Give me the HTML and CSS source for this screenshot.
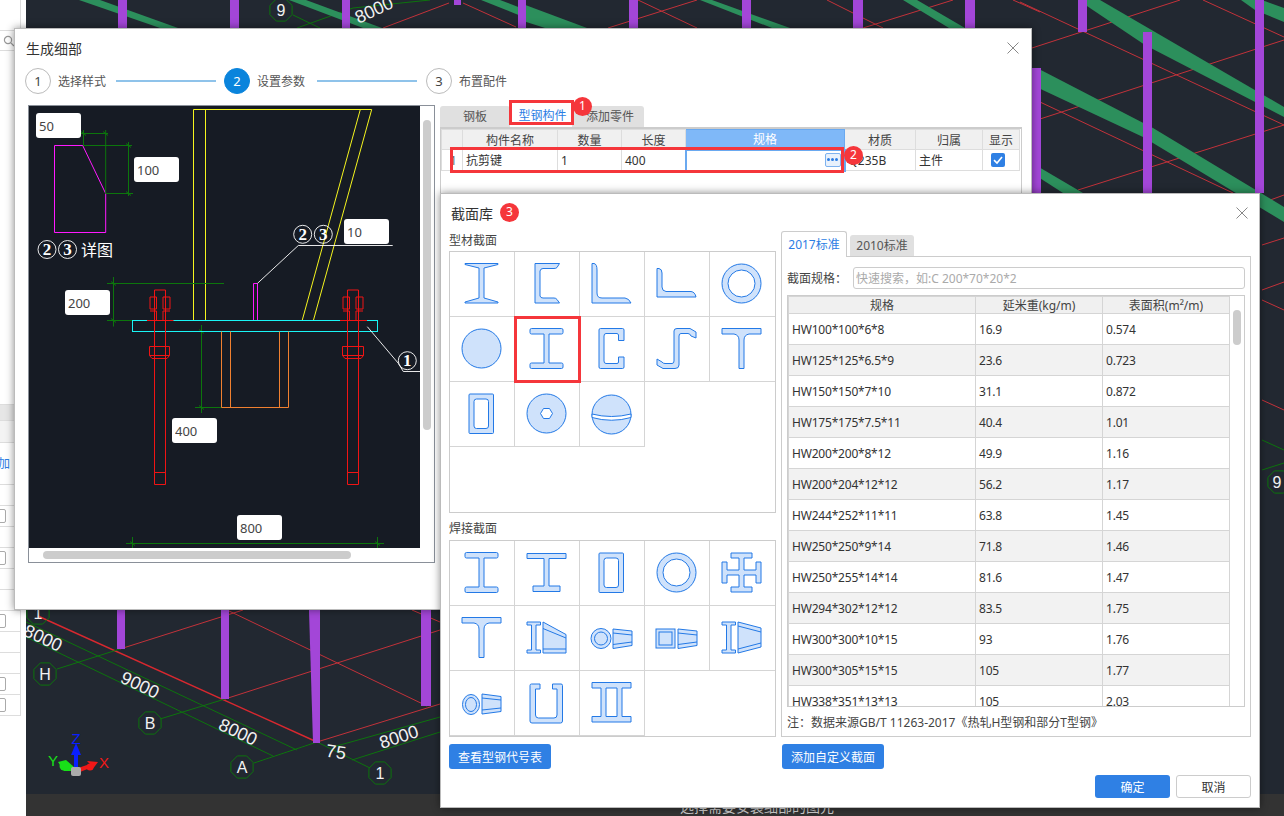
FILE: index.html
```html
<!DOCTYPE html>
<html lang="zh-CN">
<head>
  <meta charset="UTF-8"/>
  <title>生成细部</title>
  <link rel="stylesheet" href="styles.css">
</head>
<body>
<div class="app">
  <!-- left property list, mostly hidden behind the dialog -->
  <div class="side">
    <div class="side-top"></div>
    <div class="side-search">
      <svg viewBox="0 0 12 12" width="12" height="12"><circle cx="5" cy="5" r="3.6"/><path d="M7.6 7.6L11 11"/></svg>
    </div>
    <div class="side-gap"></div>
    <div class="side-band"><span>›</span></div>
    <div class="side-blank"></div>
    <div class="side-add">加</div>
    <div class="side-row"></div>
    <div class="side-row"><i></i></div>
    <div class="side-row"></div>
    <div class="side-row"><i></i></div>
    <div class="side-row"></div>
    <div class="side-row"></div>
    <div class="side-row"><i></i></div>
    <div class="side-row"></div>
    <div class="side-row"></div>
    <div class="side-row"><i></i></div>
    <div class="side-row"><i></i></div>
  </div>

  <div class="view">
    <svg class="cad" viewBox="26 0 1258 794" width="1258" height="794">
      <defs>
        <polygon id="oct" points="11.1,4.6 4.6,11.1 -4.6,11.1 -11.1,4.6 -11.1,-4.6 -4.6,-11.1 4.6,-11.1 11.1,-4.6"/>
      </defs>
      <g class="red">
        <path d="M383 28L449 3M463 3L516 27M608 28L697 0M638 0L697 28M827 0L883 28M863 28L953 0M1013 0L1040 12"/>
        <path d="M1020 2L1284 125M1203 0L1284 37M1032 48L1180 0M1040 119L1284 40M1078 190L1284 125M1040 102L1233 193M1262 203L1284 195"/>
        <path d="M1262 245L1284 238M1262 290L1284 282M1262 300L1284 310M1262 400L1284 410"/>
        <path d="M120 649L243 610M225 699L440 630M317 742L440 704M227 610L427 706M412 610L440 622"/>
        <path class="thick" d="M38 616L317 742"/>
      </g>
      <g class="grn">
        <path d="M293 15L320 28M297 28L353 8M353 8L430 0"/>
        <path d="M26 622L297 750M26 637L273 756M57 669L120 649M160 719L225 699M254 763L317 742M370 768L317 742M352 760L440 732M333 747L440 717"/>
        <path d="M1262 440L1284 450M1262 470L1284 463"/>
        <use href="#oct" x="281" y="10"/>
        <use href="#oct" x="38" y="613"/>
        <use href="#oct" x="45" y="674"/>
        <use href="#oct" x="150" y="723"/>
        <use href="#oct" x="242" y="767"/>
        <use href="#oct" x="380" y="773"/>
        <use href="#oct" x="1279" y="482"/>
      </g>
      <g class="beam">
        <polygon points="79,0 100,0 178,28 160,28"/>
        <polygon points="289,0 306,0 382,28 363,28"/>
        <polygon points="481,0 500,0 526,10 526,18"/>
        <polygon points="520,3 587,28 545,28 520,20"/>
        <polygon points="700,0 712,0 790,28 772,28"/>
        <polygon points="903,0 917,0 965,28 949,28"/>
        <polygon points="1078,0 1100,0 1284,107 1284,117 1145,45"/>
        <polygon points="1037,68 1153,128 1284,207 1284,222 1143,137 1032,85"/>
        <polygon points="1241,0 1262,0 1284,8 1284,22 1255,10"/>
        <polygon points="1032,163 1083,193 1063,193 1032,173"/>
      </g>
      <g class="col">
        <rect x="118" y="0" width="9" height="28"/><rect x="230" y="0" width="9" height="28"/>
        <rect x="342" y="0" width="8" height="28"/><rect x="454" y="0" width="7" height="5"/>
        <rect x="518" y="0" width="8" height="28"/><rect x="629" y="0" width="9" height="28"/>
        <rect x="742" y="0" width="9" height="28"/><rect x="853" y="0" width="10" height="28"/>
        <rect x="965" y="0" width="10" height="28"/><rect x="1078" y="0" width="9" height="32"/>
        <rect x="1143" y="32" width="9" height="161"/><rect x="1255" y="0" width="9" height="193"/>
        <rect x="1032" y="68" width="9" height="125"/>
        <rect x="117" y="610" width="8" height="39"/><rect x="221" y="610" width="8" height="89"/>
        <polygon points="309,610 320,610 320,743 313,743"/><rect x="421" y="610" width="10" height="96"/>
      </g>
      <g class="cad-txt">
        <text class="big" x="374" y="16" transform="rotate(-25 374 10)" text-anchor="middle">8000</text>
        <text class="big" x="43" y="644" transform="rotate(25 43 638)" text-anchor="middle">8000</text>
        <text class="big" x="140" y="691" transform="rotate(25 140 685)" text-anchor="middle">9000</text>
        <text class="big" x="238" y="738" transform="rotate(25 238 732)" text-anchor="middle">8000</text>
        <text class="big" x="336" y="758" transform="rotate(8 336 752)" text-anchor="middle">75</text>
        <text class="big" x="399" y="743" transform="rotate(-18 399 737)" text-anchor="middle">8000</text>
        <text x="281" y="16" text-anchor="middle">9</text>
        <text x="38" y="619" text-anchor="middle">1</text>
        <text x="45" y="680" text-anchor="middle">H</text>
        <text x="150" y="729" text-anchor="middle">B</text>
        <text x="242" y="773" text-anchor="middle">A</text>
        <text x="380" y="779" text-anchor="middle">1</text>
        <text x="1277" y="488" text-anchor="middle">9</text>
      </g>
      <!-- axis gizmo -->
      <g class="gizmo">
        <path class="g-z" d="M74 768V755H71L76 743L81 755H78V768Z"/>
        <path class="g-y" d="M58 762L66 760L74 767L72 771L64 771Z"/>
        <circle class="g-y" cx="64" cy="766" r="4.500"/>
        <path class="g-x" d="M78 768L90 764L87 761L98 762L92 770L90 768L80 772Z"/>
        <circle class="g-x" cx="90" cy="767" r="3.500"/>
        <rect class="g-box" x="71" y="767" width="10" height="9" rx="2"/>
        <text class="t-z" x="76" y="744" text-anchor="middle">Z</text>
        <text class="t-y" x="53" y="766" text-anchor="middle">Y</text>
        <text class="t-x" x="104" y="768" text-anchor="middle">X</text>
      </g>
    </svg>
    <div class="status">选择需要安装细部的图元</div>
  </div>
</div>

<!-- first dialog -->
<div class="win win-detail">
  <div class="win-head">
    <span class="win-title">生成细部</span>
    <svg class="win-close" viewBox="0 0 12 12" width="12" height="12"><path d="M.5 .5L11.500 11.500M11.500 .5L.5 11.500"/></svg>
  </div>
  <div class="steps">
    <span class="step-num">1</span><span class="step-txt">选择样式</span>
    <span class="step-line"></span>
    <span class="step-num on">2</span><span class="step-txt">设置参数</span>
    <span class="step-line wide"></span>
    <span class="step-num">3</span><span class="step-txt">布置配件</span>
  </div>
  <div class="detail-body">
    <div class="draw-panel">
      <div class="draw">
        <svg viewBox="29 106 391 442" width="391" height="442">
          <g class="l-yel">
            <path d="M193.500 320V109.500H371.700L313.500 320M205.500 109.500V320M360.300 109.500L302.300 320"/>
          </g>
          <g class="l-mag">
            <path d="M54.500 145.500H82.700L105.700 193.500V232.500H54.500Z"/>
            <path d="M253.500 320V283.500H257.500V320"/>
          </g>
          <g class="l-grn">
            <path d="M83.500 130V146M80 133.500H108M105.700 130V193.500M83 145.500H132M128.500 142V196M105.700 193.500H133"/>
            <path d="M107 283.500H224M113.500 277V326.500M107 320.500H142"/>
            <path d="M201.500 325V413M195 331.500H222M195 407.500H222"/>
            <path d="M126 543.500H384M132.500 537V548M377.500 537V548"/>
            <path d="M111 281.500l5 4M111 318.500l5 4M199 329.500l5 4M199 405.500l5 4M130 541.500l5 4M375 541.500l5 4M81 131.500l5 4M103 131.500l5 4M126 143.500l5 4M126 191.500l5 4"/>
          </g>
          <g class="l-cya">
            <rect x="132.500" y="320.500" width="245" height="11"/>
          </g>
          <g class="l-org">
            <path d="M221.500 331.500V407.500H288.500V331.500M230.500 331.500V407.500M279.500 331.500V407.500"/>
          </g>
          <g class="l-red">
            <path d="M154.500 290H165.500V472.500H154.500ZM154.500 484.500H165.500V472.500H154.500Z"/>
            <path d="M150 297H156.500V309H150ZM163 297H170V309H163ZM150 311H156.500V320M170 311H163V320M147 320.500H173.500"/>
            <path d="M149.500 346.500H169.500V355.500L167 358.500H152L149.500 355.500ZM149.500 355.500H169.500"/>
            <path d="M347.500 290H358.500V472.500H347.500ZM347.500 484.500H358.500V472.500H347.500Z"/>
            <path d="M343 297H349.500V309H343ZM356 297H363V309H356ZM343 311H349.500V320M363 311H356V320M340 320.500H367"/>
            <path d="M342.500 346.500H363.500V355.500L361 358.500H345L342.500 355.500ZM342.500 355.500H363.500"/>
          </g>
          <g class="l-wht">
            <path d="M392.700 245.500H298.300L257.500 283.300M367.300 326.700L398.300 363.300L403.300 371.500H420"/>
            <circle cx="47" cy="249.500" r="9"/><circle cx="67.500" cy="249.500" r="9"/>
            <circle cx="302.700" cy="234.300" r="9"/><circle cx="323.300" cy="234.300" r="9"/>
            <circle cx="407.300" cy="360.700" r="9"/>
          </g>
          <g class="draw-txt">
            <text x="47" y="255" text-anchor="middle">2</text><text x="67.500" y="255" text-anchor="middle">3</text>
            <text x="302.700" y="240" text-anchor="middle">2</text><text x="323.300" y="240" text-anchor="middle">3</text>
            <text x="407.300" y="366" text-anchor="middle">1</text>
            <text class="cn" x="81" y="256">详图</text>
          </g>
        </svg>
        <input class="dim d-50" value="50">
        <input class="dim d-100" value="100">
        <input class="dim d-10" value="10">
        <input class="dim d-200" value="200">
        <input class="dim d-400" value="400">
        <input class="dim d-800" value="800">
      </div>
      <span class="thumb thumb-v"></span>
      <span class="thumb thumb-h"></span>
    </div>

    <div class="parts">
      <div class="tabs">
        <span class="tab tab-a">钢板</span>
        <span class="tab tab-b on">型钢构件</span>
        <span class="tab tab-c">添加零件</span>
      </div>
      <div class="parts-box">
        <table class="parts-table">
          <colgroup><col class="c0"><col class="c1"><col class="c2"><col class="c2"><col class="c3"><col class="c4"><col class="c5"><col class="c6"></colgroup>
          <thead><tr><th></th><th>构件名称</th><th>数量</th><th>长度</th><th class="hot">规格</th><th>材质</th><th>归属</th><th>显示</th></tr></thead>
          <tbody><tr>
            <td class="idx">1</td><td>抗剪键</td><td>1</td><td>400</td>
            <td class="edit"><span class="more"><i></i><i></i><i></i></span></td>
            <td>Q235B</td><td>主件</td>
            <td class="chk"><span class="check"><svg viewBox="0 0 14 14" width="14" height="14"><path d="M3 7.200L6 10L11 4"/></svg></span></td>
          </tr></tbody>
        </table>
      </div>
    </div>
  </div>
  <span class="mark mark-tab"></span>
  <span class="mark mark-row"></span>
  <span class="badge badge-1">1</span>
  <span class="badge badge-2">2</span>
</div>

<!-- second dialog -->
<div class="win win-lib">
  <div class="win-head lib-head">
    <span class="win-title">截面库</span>
    <span class="badge badge-3">3</span>
    <svg class="win-close" viewBox="0 0 12 12" width="12" height="12"><path d="M.5 .5L11.500 11.500M11.500 .5L.5 11.500"/></svg>
  </div>
  <div class="lib-body">
    <div class="lib-left">
      <div class="group-label group-1">型材截面</div>
      <div class="sec-box sec-box-a">
        <div class="sec"><svg viewBox="0 0 65 65"><path d="M16 12.500H49V13.500L35 17V47L49 51V52H16V51L30 47V17L16 13.500Z"/></svg></div>
        <div class="sec"><svg viewBox="0 0 65 65"><path d="M21 12.500H45.500L43 16.500Q42 17.500 40 17.500H29Q26.500 17.500 26 20V45Q26.500 47 29 47H40Q42 47 43 48.500L45.500 52H21Z"/></svg></div>
        <div class="sec"><svg viewBox="0 0 65 65"><path d="M13 12.500H15Q18 13 18 19V42Q18 47 23 47H46Q50 47.500 52 52H13Z"/></svg></div>
        <div class="sec"><svg viewBox="0 0 65 65"><path d="M13 17.500H15Q18 18 18 22V36Q18 40 22 40.500H47Q51 41 52 46H13Z"/></svg></div>
        <div class="sec"><svg viewBox="0 0 65 65"><circle cx="32.500" cy="32.500" r="19.500"/><circle class="hole" cx="32.500" cy="32.500" r="13.500"/></svg></div>

        <div class="sec"><svg viewBox="0 0 65 65"><circle cx="32.500" cy="32.500" r="19.500"/></svg></div>
        <div class="sec on"><svg viewBox="0 0 65 65"><path d="M17.500 12.500h30a1.500 1.500 0 0 1 1.500 1.500v2.500a1.500 1.500 0 0 1-1.500 1.500H35v29h12.500a1.500 1.500 0 0 1 1.500 1.500V51a1.500 1.500 0 0 1-1.500 1.500h-30A1.500 1.500 0 0 1 16 51v-2.500a1.500 1.500 0 0 1 1.500-1.500H30V18H17.500a1.500 1.500 0 0 1-1.500-1.500V14a1.500 1.500 0 0 1 1.500-1.500z"/></svg></div>
        <div class="sec"><svg viewBox="0 0 65 65"><path d="M21.500 12.500H43.500Q45 12.500 45 14V24.500H39.500V19Q39 17.500 38 17.500H27Q25 17.500 25 20V45Q25 47.500 27 47.500H38Q39.500 47.500 39.500 46V41H45V51Q45 52.500 43.500 52.500H21.500Q20 52.500 20 51V14Q20 12.500 21.500 12.500Z"/></svg></div>
        <div class="sec"><svg viewBox="0 0 65 65"><path d="M30 15Q30 12.500 33 12.500H46L52 16V22L47 20Q46 17.500 44 17.500H37Q35 17.500 35 20V49Q35 52.500 31 52.500H19L13 49V43L18 46Q19 47.500 21 47.500H28Q30 47.500 30 45Z"/></svg></div>
        <div class="sec"><svg viewBox="0 0 65 65"><path d="M13 12.500H52V18H40Q35 19 35 24V52.500H30V24Q30 19 25 18H13Z"/></svg></div>

        <div class="sec"><svg viewBox="0 0 65 65"><path fill-rule="evenodd" d="M21 13H43.500Q44.500 13 44.500 14V51.500Q44.500 52.500 43.500 52.500H21Q20 52.500 20 51.500V14Q20 13 21 13ZM27.500 18Q25 18 25 20.500V45Q25 47.500 27.500 47.500H37Q39.500 47.500 39.500 45V20.500Q39.500 18 37 18Z"/></svg></div>
        <div class="sec"><svg viewBox="0 0 65 65"><circle cx="32.500" cy="32.500" r="19.500"/><polygon class="hole" points="26.500,32.500 29.500,27.500 35.500,27.500 38.500,32.500 35.500,37.500 29.500,37.500"/></svg></div>
        <div class="sec"><svg viewBox="0 0 65 65"><circle cx="32.500" cy="33.500" r="19.500"/><path class="hole" d="M13 33Q32.500 38 52 33V36.500Q32.500 42 13 36.500Z"/></svg></div>
      </div>

      <div class="group-label group-2">焊接截面</div>
      <div class="sec-box sec-box-b">
        <div class="sec"><svg viewBox="0 0 65 65"><path d="M17.500 12.500h30a1.500 1.500 0 0 1 1.500 1.500v2.500a1.500 1.500 0 0 1-1.500 1.500H35v29h12.500a1.500 1.500 0 0 1 1.500 1.500V51a1.500 1.500 0 0 1-1.500 1.500h-30A1.500 1.500 0 0 1 16 51v-2.500a1.500 1.500 0 0 1 1.500-1.500H30V18H17.500a1.500 1.500 0 0 1-1.500-1.500V14a1.500 1.500 0 0 1 1.500-1.500z"/></svg></div>
        <div class="sec"><svg viewBox="0 0 65 65"><path d="M13 13.500H52V18.500H35V46H46V51.500H19V46H30V18.500H13Z"/></svg></div>
        <div class="sec"><svg viewBox="0 0 65 65"><path fill-rule="evenodd" d="M21 13H43.500Q44.500 13 44.500 14V51.500Q44.500 52.500 43.500 52.500H21Q20 52.500 20 51.500V14Q20 13 21 13ZM27.500 18Q25 18 25 20.500V45Q25 47.500 27.500 47.500H37Q39.500 47.500 39.500 45V20.500Q39.500 18 37 18Z"/></svg></div>
        <div class="sec"><svg viewBox="0 0 65 65"><circle cx="32.500" cy="32.500" r="19.500"/><circle class="hole" cx="32.500" cy="32.500" r="13.500"/></svg></div>
        <div class="sec"><svg viewBox="0 0 65 65"><path d="M22 13H43V18H35V30H47V22H52V43H47V35H35V47H43V52H22V47H30V35H18V43H13V22H18V30H30V18H22Z"/></svg></div>

        <div class="sec"><svg viewBox="0 0 65 65"><path d="M13 12.500H52V18H40Q35 19 35 24V52.500H30V24Q30 19 25 18H13Z"/></svg></div>
        <div class="sec"><svg viewBox="0 0 65 65"><path d="M13 17H26.500V20H22V45H26.500V48H13V45H17.500V20H13Z"/><path d="M29 17L52 29.500V48H29Z"/><path class="ln" d="M29 23.500L52 33M29 44H52"/></svg></div>
        <div class="sec"><svg viewBox="0 0 65 65"><circle cx="22" cy="33.500" r="10"/><circle class="hole-soft" cx="22" cy="33.500" r="6.500"/><path d="M34 24L53 26V40.500L34 43.500Z"/><path class="ln" d="M34 28L53 30M34 39.500L53 37"/></svg></div>
        <div class="sec"><svg viewBox="0 0 65 65"><rect x="12" y="24" width="19" height="19"/><rect class="hole-soft" x="15" y="27" width="13" height="13"/><path d="M34 24L53 26V40.500L34 43.500Z"/><path class="ln" d="M34 28L53 30M34 39.500L53 37"/></svg></div>
        <div class="sec"><svg viewBox="0 0 65 65"><path d="M13 17H26.500V20H22V45H26.500V48H13V45H17.500V20H13Z"/><path d="M29 17L52 23V42L29 48Z"/><path class="ln" d="M29 21L52 27M29 44L52 38"/></svg></div>

        <div class="sec"><svg viewBox="0 0 65 65"><ellipse cx="22" cy="34.500" rx="8.500" ry="10"/><ellipse class="hole-soft" cx="22" cy="34.500" rx="5.500" ry="7"/><path d="M33 24L52 26.500V41.500L33 44Z"/><path class="ln" d="M33 28L52 30M33 40L52 38"/></svg></div>
        <div class="sec"><svg viewBox="0 0 65 65"><path d="M17.500 14H26V19H21.500V45Q21.500 48 24.500 48H40Q43 48 43 45V19H38.500V14H47Q48.500 14 48.500 15.500V51Q48.500 53 46.500 53H18Q16 53 16 51V15.500Q16 14 17.500 14Z"/></svg></div>
        <div class="sec"><svg viewBox="0 0 65 65"><path d="M13 12.500H52V18H43V46.500H52V52H13V46.500H22V18H13ZM27 18V46.500H38V18Z" fill-rule="evenodd"/></svg></div>
      </div>
      <button class="btn btn-lib">查看型钢代号表</button>
    </div>

    <div class="lib-right">
      <div class="std-tabs">
        <span class="std on">2017标准</span>
        <span class="std">2010标准</span>
      </div>
      <div class="std-panel">
        <div class="search-row">
          <label>截面规格<span class="cc">：</span></label>
          <input class="search" placeholder="快速搜索，如:C 200*70*20*2">
        </div>
        <div class="spec-wrap">
          <table class="spec">
            <colgroup><col class="s1"><col class="s2"><col class="s2"></colgroup>
            <thead><tr><th>规格</th><th>延米重(kg/m)</th><th>表面积(m²/m)</th></tr></thead>
            <tbody>
              <tr><td>HW100*100*6*8</td><td>16.9</td><td>0.574</td></tr>
              <tr><td>HW125*125*6.5*9</td><td>23.6</td><td>0.723</td></tr>
              <tr><td>HW150*150*7*10</td><td>31.1</td><td>0.872</td></tr>
              <tr><td>HW175*175*7.5*11</td><td>40.4</td><td>1.01</td></tr>
              <tr><td>HW200*200*8*12</td><td>49.9</td><td>1.16</td></tr>
              <tr><td>HW200*204*12*12</td><td>56.2</td><td>1.17</td></tr>
              <tr><td>HW244*252*11*11</td><td>63.8</td><td>1.45</td></tr>
              <tr><td>HW250*250*9*14</td><td>71.8</td><td>1.46</td></tr>
              <tr><td>HW250*255*14*14</td><td>81.6</td><td>1.47</td></tr>
              <tr><td>HW294*302*12*12</td><td>83.5</td><td>1.75</td></tr>
              <tr><td>HW300*300*10*15</td><td>93</td><td>1.76</td></tr>
              <tr><td>HW300*305*15*15</td><td>105</td><td>1.77</td></tr>
              <tr><td>HW338*351*13*13</td><td>105</td><td>2.03</td></tr>
            </tbody>
          </table>
          <span class="spec-thumb"></span>
        </div>
        <div class="note">注<span class="cc">：</span>数据来源GB/T 11263-2017《热轧H型钢和部分T型钢》</div>
      </div>
      <button class="btn btn-lib btn-add">添加自定义截面</button>
      <div class="lib-foot">
        <button class="btn btn-ok">确定</button>
        <button class="btn-cancel">取消</button>
      </div>
    </div>
  </div>
</div>
</body>
</html>
```

FILE: styles.css
```css
* { box-sizing: border-box; }
html, body {
  margin: 0;
  width: 1284px;
  height: 816px;
  overflow: hidden;
}
body {
  position: relative;
  font-family: "Noto Sans", "Noto Sans CJK SC", sans-serif;
  font-size: 12px;
  color: #333;
  background: #fff;
}
.app { display: flex; height: 816px; }
.cc { font-family: "Noto Sans CJK TC", sans-serif; }

/* left list */
.side { width: 26px; flex: none; background: #fff; overflow: hidden; }
.side > div { width: 21px; border-right: 1px solid #ddd; border-bottom: 1px solid #ddd; }
.side-top { height: 31px; }
.side-search { height: 20px; display: flex; align-items: center; }
.side-search svg { fill: none; stroke: #999; stroke-width: 1.2; margin-left: 3px; }
.side-gap { height: 354px; }
.side-band { height: 16px; background: #e6e6e6; color: #999; text-align: right; line-height: 14px; }
.side-blank { height: 22px; background: #f3f3f3; }
.side-add { height: 42px; color: #2b7de4; line-height: 42px; margin-left: -2px; width: 23px !important; }
.side-row { height: 21px; position: relative; overflow: hidden; }
.side-row i {
  position: absolute;
  left: -8px;
  top: 3px;
  width: 14px;
  height: 14px;
  border: 1px solid #aaa;
  border-radius: 2px;
}

/* CAD view */
.view {
  flex: 1;
  display: flex;
  flex-direction: column;
  justify-content: flex-end;
  position: relative;
  background: #222831;
  overflow: hidden;
}
.cad { position: absolute; left: 0; top: 0; }
.red path { fill: none; stroke: #c2323a; stroke-width: 1; }
.red .thick { stroke: #d8282f; stroke-width: 1.5; }
.grn path, .grn use { fill: none; stroke: #0d740d; stroke-width: 1; }
.beam polygon { fill: #2c8f5c; }
.col rect, .col polygon { fill: #a346d8; }
.cad-txt text { fill: #f2f2f2; font-size: 16px; font-family: "Liberation Sans", sans-serif; }
.cad-txt .big { font-size: 18px; }
.g-z, .t-z { fill: #0a1fff; }
.g-y, .t-y { fill: #18e018; }
.g-x, .t-x { fill: #f01818; }
.g-box { fill: #aaa; }
.gizmo text { font-size: 15px; font-family: "Liberation Sans", sans-serif; }
.status {
  height: 22px;
  background: #333;
  color: #ccc;
  position: relative;
  padding: 5px 0 0 654px;
  font-size: 14px;
  line-height: 16px;
}

/* dialogs */
.win {
  position: absolute;
  background: #fff;
  border: 1px solid #bbb;
  box-shadow: 0 0 8px rgba(0, 0, 0, .45);
}
.win-detail { left: 14px; top: 28px; width: 1018px; height: 582px; }
.win-lib { left: 440px; top: 193px; width: 820px; height: 615px; }
.win-head { height: 37px; display: flex; align-items: center; padding: 0 12px 0 11px; }
.win-title { font-size: 14px; color: #333; }
.win-close { margin-left: auto; fill: none; stroke: #888; stroke-width: 1; }

.steps { height: 29px; display: flex; align-items: center; padding-left: 10px; color: #555; }
.step-num {
  width: 26px;
  height: 26px;
  border: 1px solid #bbb;
  border-radius: 50%;
  text-align: center;
  line-height: 24px;
  font-size: 13px;
  color: #444;
  margin-right: 7px;
}
.step-num.on { background: #0a84dc; border-color: #0a84dc; color: #fff; }
.step-line { width: 100px; height: 2px; background: #8fc3ea; margin: 0 8px 0 10px; }
.step-line.wide { margin: 0 9px 0 12px; }

.detail-body { display: flex; gap: 5px; padding: 10px 0 0 13px; }

.draw-panel { position: relative; width: 407px; height: 458px; border: 1px solid #8a9099; flex: none; }
.draw { position: relative; width: 391px; height: 442px; background: #161b24; overflow: hidden; }
.draw svg { display: block; }
.thumb { position: absolute; background: #ccc; border-radius: 4px; }
.thumb-v { left: 394px; top: 14px; width: 8px; height: 310px; }
.thumb-h { left: 14px; top: 445px; width: 308px; height: 8px; }
.l-yel path { fill: none; stroke: #f5f51e; }
.l-mag path { fill: none; stroke: #ff19ff; }
.l-grn path { fill: none; stroke: #0c760c; }
.l-cya rect { fill: none; stroke: #19f5f5; }
.l-org path { fill: none; stroke: #f08030; }
.l-red path { fill: none; stroke: #f01414; }
.l-wht path, .l-wht circle { fill: none; stroke: #fff; stroke-width: .9; }
.draw-txt text { fill: #fff; font-family: "Liberation Serif", serif; font-weight: bold; font-size: 17px; }
.draw-txt .cn { font-family: "Noto Sans CJK SC", sans-serif; font-weight: normal; font-size: 16px; }
.dim {
  position: absolute;
  width: 45px;
  height: 25px;
  border: 0;
  border-radius: 3px;
  background: #fff;
  padding: 0 3px;
  font: 13px "Noto Sans", sans-serif;
  color: #444;
}
.d-50 { left: 7px; top: 7px; }
.d-100 { left: 105px; top: 51px; }
.d-10 { left: 315px; top: 113px; }
.d-200 { left: 36px; top: 184px; }
.d-400 { left: 143px; top: 312px; }
.d-800 { left: 208px; top: 409px; }

/* parts table */
.parts { width: 582px; flex: none; }
.tabs { height: 22px; display: flex; align-items: flex-end; }
.tab { height: 21px; background: #e0e0e0; text-align: center; line-height: 22px; color: #555; }
.tab-a { width: 70px; border-radius: 3px 3px 0 0; }
.tab-b { width: 62px; height: 22px; background: #fff; color: #2b7de4; padding-left: 3px; }
.tab-c { width: 72px; border-radius: 3px 3px 0 0; padding-left: 4px; }
.parts-box { height: 70px; border: 1px solid #ccc; border-top-width: 2px; border-bottom: 0; background: #fff; }
.parts-table { border-collapse: collapse; table-layout: fixed; width: 578px; }
.c0 { width: 21px; }
.c1 { width: 95px; }
.c2 { width: 64px; }
.c3 { width: 159px; }
.c4 { width: 71px; }
.c5 { width: 67px; }
.c6 { width: 37px; }
.parts-table th {
  height: 20px;
  padding: 0;
  font-weight: normal;
  background: #f0f0f0;
  border: 1px solid #ddd;
  color: #444;
}
.parts-table th.hot { background: #7fb8f8; color: #fff; border-color: #6aa9f0; }
.parts-table td { height: 21px; padding: 0 3px; border: 1px solid #ddd; color: #333; }
.parts-table .edit { border: 2px solid #6aa9f0; padding: 0; position: relative; }
.parts-table .chk { padding-left: 8px; }
.parts-table .idx { padding-left: 8px; color: #666; }
.more {
  position: absolute;
  right: 3px;
  top: 2px;
  width: 16px;
  height: 14px;
  border: 1px solid #7db2ef;
  border-radius: 2px;
  background: #e8f1fc;
  display: flex;
  align-items: center;
  justify-content: center;
  gap: 1px;
}
.more i { width: 3px; height: 3px; background: #2b7de4; border-radius: 50%; }
.check { display: block; width: 14px; height: 14px; border-radius: 2px; background: #2f80e4; }
.check svg { display: block; fill: none; stroke: #fff; stroke-width: 1.6; }

/* red callouts */
.mark { position: absolute; border: 3px solid #f5363b; }
.mark-tab { left: 494px; top: 71px; width: 65px; height: 25px; }
.mark-row { left: 435px; top: 118px; width: 394px; height: 26px; }
.badge {
  position: absolute;
  width: 19px;
  height: 19px;
  border-radius: 50%;
  background: #f5363b;
  color: #fff;
  text-align: center;
  line-height: 18px;
  font-size: 12px;
}
.badge-1 { left: 558px; top: 68px; }
.badge-2 { left: 829px; top: 117px; }
.badge-3 { position: static; margin-left: 7px; }

/* section library */
.lib-head { padding-left: 10px; padding-right: 11px; }
.lib-body { display: flex; gap: 5px; padding: 0 9px 0 8px; }
.lib-left { width: 327px; flex: none; }
.group-label { height: 17px; line-height: 17px; color: #444; }
.group-1 { margin-top: 1px; }
.group-2 { margin-top: 7px; }
.sec-box {
  display: grid;
  grid-template-columns: repeat(5, 65px);
  grid-auto-rows: 65px;
  width: 327px;
  border: 1px solid #ccc;
  margin-top: 2px;
}
.sec-box-a { height: 262px; }
.sec-box-b { height: 197px; margin-top: 3px; }
.sec { border-right: 1px solid #d5d5d5; border-bottom: 1px solid #d5d5d5; position: relative; }
.sec:nth-child(5n) { border-right: 0; }
.sec.on { outline: 3px solid #f5363b; outline-offset: -2px; z-index: 1; }
.sec svg { display: block; width: 65px; height: 65px; margin: -1px 0 0 -1px; }
.sec svg path, .sec svg circle, .sec svg rect, .sec svg polygon, .sec svg ellipse {
  fill: #cfe2fb;
  stroke: #2379e6;
  stroke-width: 1;
}
.sec svg .hole { fill: #fff; }
.sec svg .hole-soft { fill: #cfe2fb; }
.sec svg .ln { fill: none; }
.btn {
  display: block;
  height: 25px;
  border: 0;
  border-radius: 3px;
  background: #2f80e4;
  color: #fff;
  font: inherit;
}
.btn-lib { width: 102px; margin-top: 7px; padding: 0; }
.btn-add { margin-left: 1px; }
.lib-right { width: 470px; flex: none; position: relative; }
.std-tabs { display: flex; align-items: flex-end; gap: 3px; height: 25px; }
.std {
  width: 64px;
  height: 21px;
  background: #e0e0e0;
  border-radius: 3px 3px 0 0;
  text-align: center;
  line-height: 21px;
  color: #555;
}
.std.on {
  width: 66px;
  height: 26px;
  margin-bottom: -1px;
  background: #fff;
  border: 1px solid #ccc;
  border-bottom: 0;
  color: #2b7de4;
  line-height: 25px;
  position: relative;
}
.std-panel { height: 481px; border: 1px solid #ccc; padding: 10px 5px 0; }
.search-row { display: flex; align-items: center; height: 22px; }
.search-row label { width: 66px; color: #444; }
.search {
  flex: 1;
  height: 22px;
  border: 1px solid #ccc;
  border-radius: 3px;
  padding: 0 2px;
  font: 12px "Noto Sans", "Noto Sans CJK TC", sans-serif;
  color: #333;
  outline: 0;
}
.search::placeholder { color: #aaa; }
.spec-wrap {
  position: relative;
  height: 412px;
  margin-top: 6px;
  border: 1px solid #ccc;
  overflow: hidden;
}
.spec { border-collapse: collapse; table-layout: fixed; width: 441px; }
.s1 { width: 187px; }
.s2 { width: 127px; }
.spec th {
  height: 17px;
  padding: 0;
  font-weight: normal;
  line-height: 15px;
  background: #f0f0f0;
  border: 1px solid #d5d5d5;
  color: #444;
}
.spec td { height: 31px; padding: 0 3px; border: 1px solid #d5d5d5; color: #333; letter-spacing: -.2px; }
.spec tbody tr:nth-child(even) td { background: #f2f2f2; }
.spec-thumb { position: absolute; right: 3px; top: 14px; width: 8px; height: 35px; background: #ccc; border-radius: 4px; }
.note { height: 29px; line-height: 29px; color: #444; }
.lib-foot { display: flex; justify-content: flex-end; gap: 6px; margin-top: 6px; }
.btn-ok { width: 75px; height: 23px; padding: 0; }
.btn-cancel {
  width: 75px;
  height: 23px;
  padding: 0;
  border: 1px solid #ccc;
  border-radius: 3px;
  background: #fff;
  font: inherit;
  color: #333;
}
```
